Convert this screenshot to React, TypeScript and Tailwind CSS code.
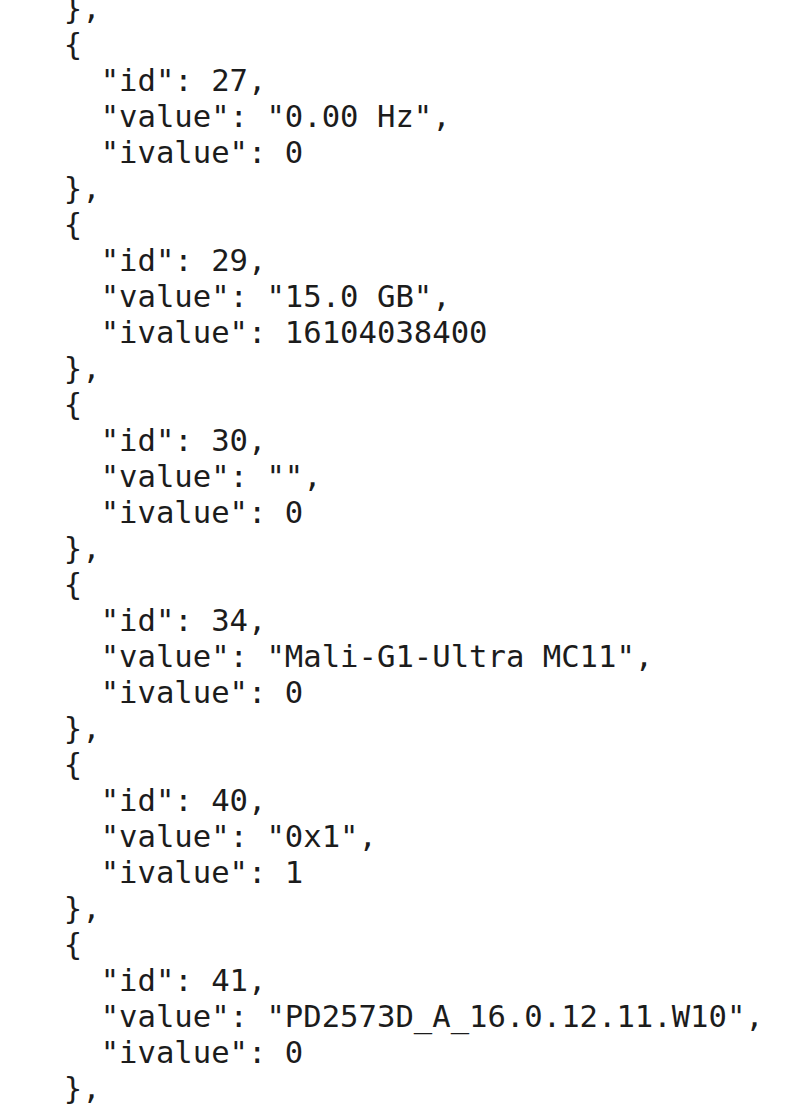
const lines = [
  "},",
  "{",
  '  "id": 27,',
  '  "value": "0.00 Hz",',
  '  "ivalue": 0',
  "},",
  "{",
  '  "id": 29,',
  '  "value": "15.0 GB",',
  '  "ivalue": 16104038400',
  "},",
  "{",
  '  "id": 30,',
  '  "value": "",',
  '  "ivalue": 0',
  "},",
  "{",
  '  "id": 34,',
  '  "value": "Mali-G1-Ultra MC11",',
  '  "ivalue": 0',
  "},",
  "{",
  '  "id": 40,',
  '  "value": "0x1",',
  '  "ivalue": 1',
  "},",
  "{",
  '  "id": 41,',
  '  "value": "PD2573D_A_16.0.12.11.W10",',
  '  "ivalue": 0',
  "},",
];

export default function App() {
  return (
    <div className="h-[1114px] w-[800px] overflow-hidden bg-white">
      <pre className="mt-[-9px] pl-[27px] font-['DejaVu_Sans_Mono',monospace] text-[30.6px] leading-[36px] text-[#1c1c1c]">
        {lines.map((line, i) => (
          <div key={i}>{"  " + line}</div>
        ))}
      </pre>
    </div>
  );
}
